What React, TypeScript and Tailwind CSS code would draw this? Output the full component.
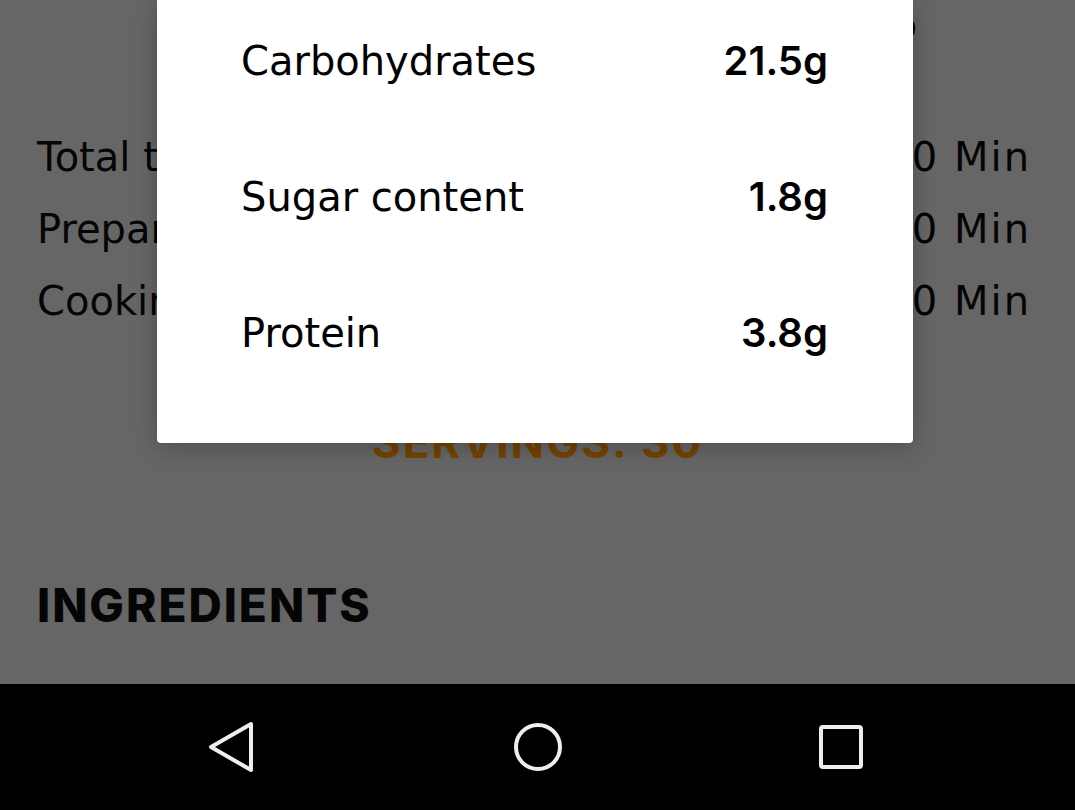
const nutrients = [
  { label: "Carbohydrates", value: "21.5g" },
  { label: "Sugar content", value: "1.8g" },
  { label: "Protein", value: "3.8g" },
];

const times = [
  { label: "Total time", value: "30 Min" },
  { label: "Preparation time", value: "10 Min" },
  { label: "Cooking time", value: "20 Min" },
];

const App = () => {
  return (
    <div className="relative h-[810px] w-[1075px] overflow-hidden bg-[#666666] font-['DejaVu_Sans','Inter',sans-serif] text-[#050505]">
      {/* page behind the dialog */}
      <div className="flex h-[684px] flex-col">
        <div className="flex h-[52px] justify-end pr-[158px] pt-[6px]">
          <span className="text-[36px] leading-[40px]">Recipe info</span>
        </div>
        <div className="mt-[81px] flex flex-col gap-[24px] pl-[37px] pr-[44px]">
          {times.map((t) => (
            <div key={t.label} className="flex h-[48px] items-center justify-between text-[40px]">
              <span>{t.label}</span>
              <span className="tracking-[2px]">{t.value}</span>
            </div>
          ))}
        </div>
        <div className="mt-[84px] flex justify-center">
          <span className="font-['Inter',sans-serif] text-[44px] font-bold tracking-[2px] text-[#744300]">SERVINGS: 30</span>
        </div>
        <div className="mt-[96px] pl-[37px]">
          <span className="font-['Inter',sans-serif] text-[46px] font-extrabold tracking-[2px]">INGREDIENTS</span>
        </div>
      </div>

      {/* android nav bar */}
      <div className="flex h-[126px] items-center justify-center gap-[203px] bg-black">
        <div className="flex w-[100px] justify-center pr-[6px]">
          <svg width="50" height="52" viewBox="0 0 50 52" fill="none" stroke="#eeeeee" strokeWidth="4" strokeLinejoin="round">
            <path d="M44 3 L4 26 L44 49 Z" />
          </svg>
        </div>
        <div className="flex w-[100px] justify-center">
          <svg width="52" height="52" viewBox="0 0 52 52" fill="none" stroke="#eeeeee" strokeWidth="4">
            <circle cx="26" cy="26" r="22" />
          </svg>
        </div>
        <div className="flex w-[100px] justify-center">
          <svg width="46" height="46" viewBox="0 0 46 46" fill="none" stroke="#eeeeee" strokeWidth="4">
            <rect x="3" y="3" width="40" height="40" rx="2" />
          </svg>
        </div>
      </div>

      {/* nutrition dialog */}
      <div className="absolute left-[157px] top-0 flex h-[443px] w-[756px] flex-col gap-[88px] rounded-b-[4px] bg-white pl-[84px] pr-[85px] pt-[37px] shadow-[0_4px_24px_rgba(0,0,0,0.25)]">
        {nutrients.map((n) => (
          <div key={n.label} className="flex h-[48px] items-center justify-between text-[40px] text-black">
            <span>{n.label}</span>
            <span className="font-['Inter',sans-serif] font-semibold">{n.value}</span>
          </div>
        ))}
      </div>
    </div>
  );
};

export default App;
